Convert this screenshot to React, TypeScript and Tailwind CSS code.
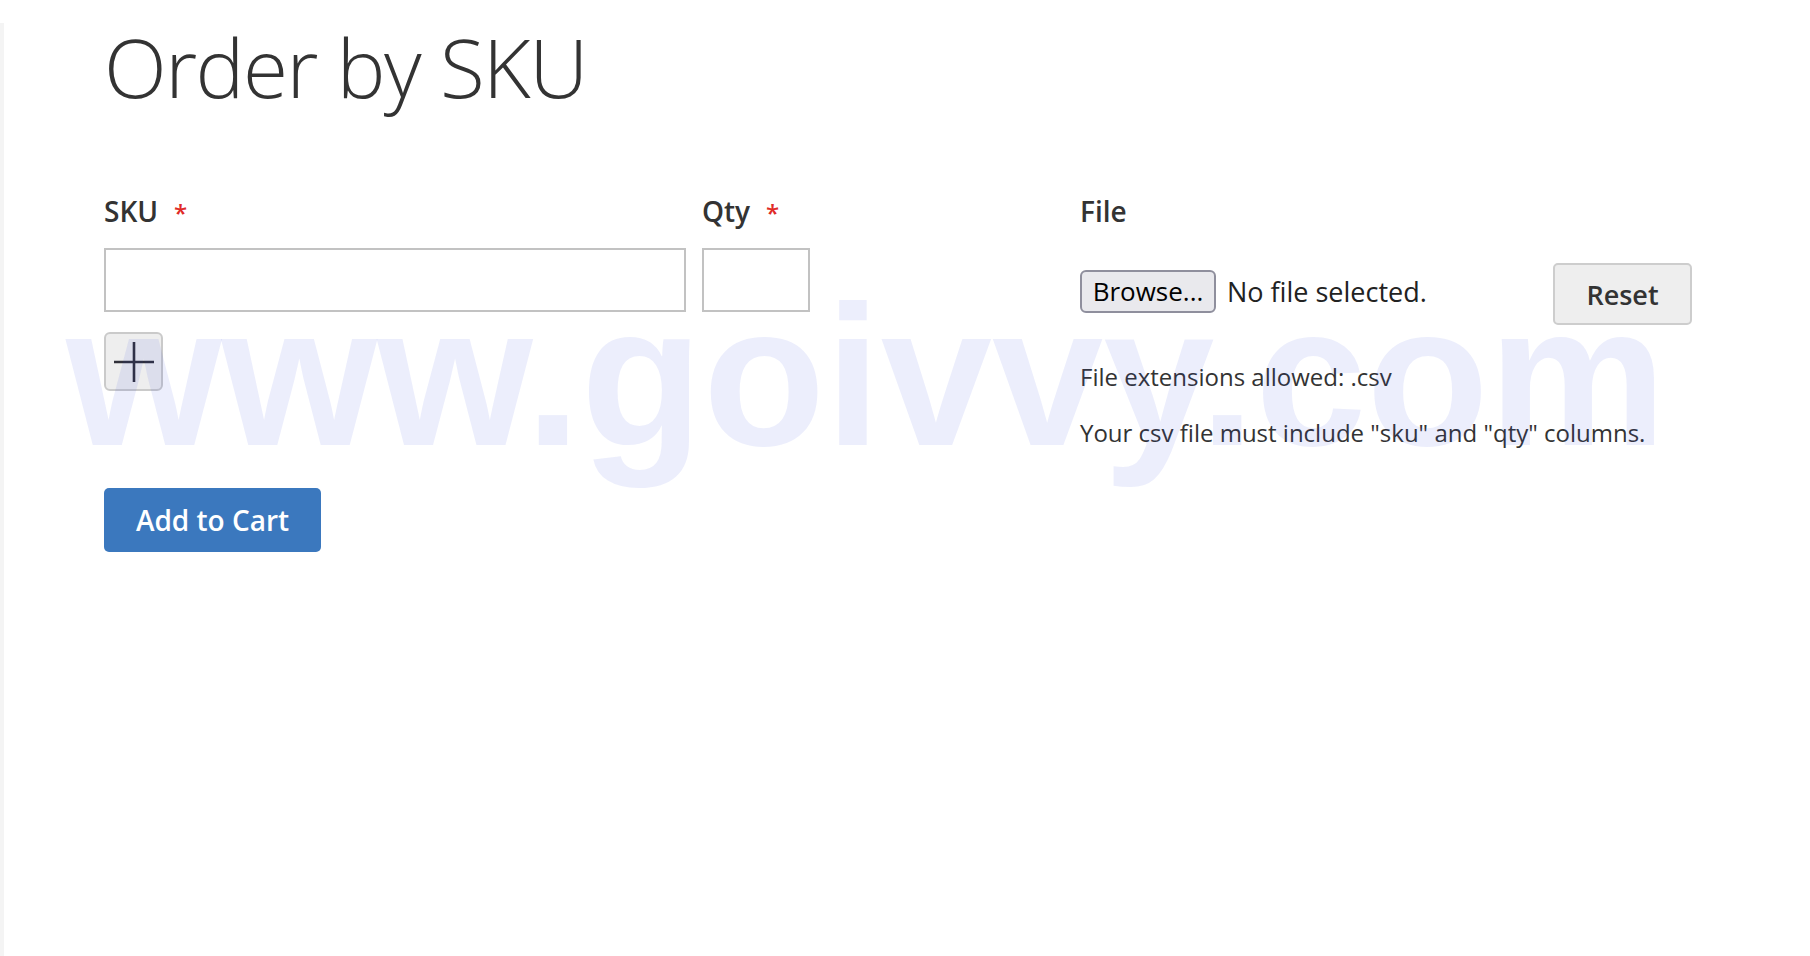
import React from "react";

const Required = () => <span className="ml-[16px] text-[24px] text-[#e02b27]">*</span>;

export default function App() {
  return (
    <div className="relative min-h-screen w-full bg-white flex font-['Open_Sans',sans-serif] text-[#333333] overflow-hidden">
      {/* thin left rail */}
      <div className="w-[4px] mt-[23px] bg-[#f4f4f4] shrink-0" />

      <main className="flex-1 pl-[100px]">
        <h1 className="mt-[25px] text-[82px] font-light leading-none tracking-[-1.5px] text-[#333333]">Order by SKU</h1>

        <div className="mt-[90px] flex">
          {/* SKU / Qty rows */}
          <div className="w-[706px] flex flex-col">
            <div className="flex gap-[16px]">
              <div className="flex flex-col">
                <label className="text-[28px] font-semibold leading-none">
                  SKU<Required />
                </label>
                <input className="mt-[23px] w-[582px] h-[64px] border-2 border-[#c2c2c2] bg-white outline-none" />
              </div>
              <div className="flex flex-col">
                <label className="text-[28px] font-semibold leading-none">
                  Qty<Required />
                </label>
                <input className="mt-[23px] w-[108px] h-[64px] border-2 border-[#c2c2c2] bg-white outline-none" />
              </div>
            </div>

            <button className="mt-[20px] w-[59px] h-[59px] rounded-[6px] border-2 border-[#cacaca] bg-[#eeeeee] flex items-center justify-center">
              <svg width="40" height="40" viewBox="0 0 40 40">
                <path d="M20 0V40M0 20H40" stroke="#30303a" strokeWidth="2.6" />
              </svg>
            </button>

            <button className="mt-[97px] w-[217px] h-[64px] rounded-[5px] bg-[#3b78be] text-white text-[28px] font-semibold leading-none">
              Add to Cart
            </button>
          </div>

          {/* File upload column */}
          <div className="ml-[270px] w-[612px] flex flex-col">
            <label className="text-[28px] font-semibold leading-none">File</label>

            <div className="mt-[38px] h-[62px] flex items-center justify-between">
              <div className="flex items-center gap-[11px]">
                <button className="w-[136px] h-[43px] mt-[-6px] rounded-[6px] border-2 border-[#8f8f9d] bg-[#e9e9ed] text-black text-[26px] leading-none">
                  Browse...
                </button>
                <span className="mt-[-6px] text-[27px] leading-none text-[#222222]">No file selected.</span>
              </div>
              <button className="w-[139px] h-[62px] rounded-[5px] border-2 border-[#cdcdcd] bg-[#eeeeee] text-[27px] font-semibold leading-none text-[#333333]">
                Reset
              </button>
            </div>

            <p className="mt-[40px] text-[24px] leading-none">File extensions allowed: .csv</p>
            <p className="mt-[32px] text-[24px] leading-none">Your csv file must include "sku" and "qty" columns.</p>
          </div>
        </div>
      </main>

      {/* watermark overlay */}
      <span className="pointer-events-none absolute left-[66px] top-[276px] z-10 whitespace-nowrap font-['Liberation_Sans',Arial,sans-serif] text-[200px] font-bold leading-none text-[rgba(40,70,220,0.09)]">
        www.goivvy.com
      </span>
    </div>
  );
}
